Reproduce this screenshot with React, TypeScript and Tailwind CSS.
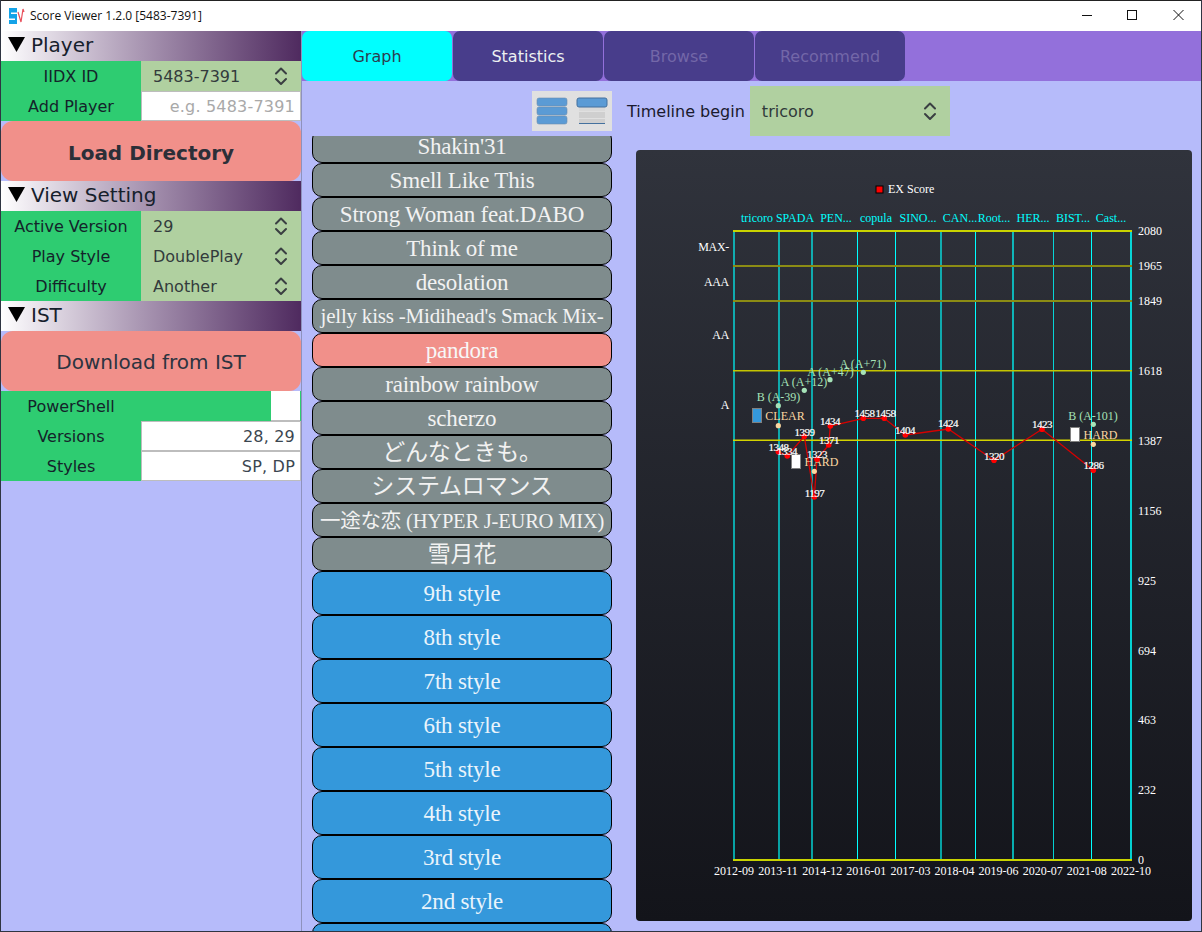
import React from "react";

const Chevrons = () => (
  <svg width="14" height="20" viewBox="0 0 14 20" className="shrink-0" fill="none" stroke="#3a3f42" strokeWidth="2" strokeLinecap="round" strokeLinejoin="round">
    <path d="M2 7.500 7 2.500l5 5" />
    <path d="M2 13 7 18l5-5" />
  </svg>
);

const Header = ({ title }: { title: string }) => (
  <div className="h-[30px] flex items-center pl-[7px] gap-[6px] bg-gradient-to-r from-white to-[#4f2a5f] text-[20px] text-[#16202c]">
    <svg width="17" height="15" viewBox="0 0 17 15" className="shrink-0 mb-[3px]"><polygon points="0,0 17,0 8.500,15" fill="#000" /></svg>
    <span className="pb-[2px]">{title}</span>
  </div>
);

const Label = ({ text }: { text: string }) => (
  <div className="w-[140px] h-full pt-[2px] bg-[#2ecc71] flex items-center justify-center text-[#14232a]">{text}</div>
);

const SelectRow = ({ label, value }: { label: string; value: string }) => (
  <div className="flex h-[30px]">
    <Label text={label} />
    <div className="flex-1 bg-[#b0d0a0] flex items-center justify-between pl-[12px] pr-[13px] text-[#333b3c]">
      <span className="pt-[2px]">{value}</span>
      <Chevrons />
    </div>
  </div>
);

const InputRow = ({ label, value, muted = false }: { label: string; value: string; muted?: boolean }) => (
  <div className="flex h-[30px]">
    <Label text={label} />
    <div className={`flex-1 pt-[2px] bg-white border border-[#bdbdbd] flex items-center justify-end pr-[5px] tracking-[0.2px] ${muted ? "text-[#a9a9a9]" : "text-[#3b4650]"}`}>{value}</div>
  </div>
);

const Sidebar = () => (
  <div className="w-[300px] shrink-0 flex flex-col">
    <Header title="Player" />
    <SelectRow label="IIDX ID" value="5483-7391" />
    <InputRow label="Add Player" value="e.g. 5483-7391" muted />
    <div className="h-[60px] pt-[3px] bg-[#f1908a] rounded-[12px] flex items-center justify-center text-[20px] font-bold text-[#2c2f38]">Load Directory</div>
    <Header title="View Setting" />
    <SelectRow label="Active Version" value="29" />
    <SelectRow label="Play Style" value="DoublePlay" />
    <SelectRow label="Difficulty" value="Another" />
    <Header title="IST" />
    <div className="h-[60px] pt-[2px] bg-[#f1908a] rounded-[12px] flex items-center justify-center text-[20px] text-[#2c3440]">Download from IST</div>
    <div className="flex h-[30px] bg-[#2ecc71]">
      <Label text="PowerShell" />
      <div className="flex-1" />
      <div className="w-[29px] bg-white border-b border-[#bdbdbd] mr-px" />
    </div>
    <InputRow label="Versions" value="28, 29" />
    <InputRow label="Styles" value="SP, DP" />
  </div>
);

const Tab = ({ text, kind }: { text: string; kind: "active" | "normal" | "disabled" }) => (
  <div
    className={`w-[150px] h-[50px] pt-[2px] mr-px rounded-[7px] flex items-center justify-center ${
      kind === "active" ? "bg-[#00ffff] text-[#2c3e50]" : kind === "normal" ? "bg-[#483d8b] text-[#ecf0f1]" : "bg-[#483d8b] text-[#7367a8]"
    }`}
  >
    {text}
  </div>
);

const ViewToggle = () => (
  <svg width="80" height="40" viewBox="0 0 80 40" className="shrink-0">
    <rect width="80" height="40" fill="#e0e0e0" />
    <rect x="5" y="7" width="30" height="8" rx="2" fill="#5b9bd5" stroke="#6d8fae" strokeWidth="0.6" />
    <rect x="5" y="16" width="30" height="8" rx="2" fill="#5b9bd5" stroke="#6d8fae" strokeWidth="0.6" />
    <rect x="5" y="25" width="30" height="8" rx="2" fill="#5b9bd5" stroke="#6d8fae" strokeWidth="0.6" />
    <rect x="47" y="15" width="26" height="5" fill="#d9d9d9" />
    <rect x="47" y="21" width="26" height="6" fill="#cfcfcf" />
    <rect x="47" y="28" width="26" height="4" fill="#cfcfcf" />
    <rect x="47" y="32" width="26" height="1" fill="#44719e" />
    <rect x="45" y="7" width="30" height="9" rx="2" fill="#5b9bd5" stroke="#44719e" strokeWidth="1" />
  </svg>
);

const serif = "font-['Liberation_Serif','Noto_Sans_CJK_JP',serif]";

type Item = { t: string; c: string; s?: string };
const rows: Item[] = [
  { t: "Shakin'31", c: "gray" },
  { t: "Smell Like This", c: "gray" },
  { t: "Strong Woman feat.DABO", c: "gray" },
  { t: "Think of me", c: "gray" },
  { t: "desolation", c: "gray" },
  { t: "jelly kiss -Midihead's Smack Mix-", c: "gray", s: "text-[21px]" },
  { t: "pandora", c: "red" },
  { t: "rainbow rainbow", c: "gray" },
  { t: "scherzo", c: "gray" },
  { t: "どんなときも。", c: "gray" },
  { t: "システムロマンス", c: "gray" },
  { t: "一途な恋 (HYPER J-EURO MIX)", c: "gray", s: "text-[20.5px]" },
  { t: "雪月花", c: "gray" },
  { t: "9th style", c: "blue" },
  { t: "8th style", c: "blue" },
  { t: "7th style", c: "blue" },
  { t: "6th style", c: "blue" },
  { t: "5th style", c: "blue" },
  { t: "4th style", c: "blue" },
  { t: "3rd style", c: "blue" },
  { t: "2nd style", c: "blue" },
  { t: "1st style", c: "blue" },
];

const SongList = () => (
  <div className="w-[300px] ml-[10px] shrink-0 overflow-hidden h-[795px]">
    <div className={`-mt-[7px] flex flex-col tracking-[-0.2px] ${serif}`}>
      {rows.map((r) => (
        <div
          key={r.t}
          className={`shrink-0 pt-[2px] border border-black rounded-[10px] flex items-center justify-center whitespace-nowrap ${r.s ?? "text-[23px]"} ${
            r.c === "gray"
              ? "h-[34px] bg-[#7f8c8d] text-[#f2f2f2]"
              : r.c === "red"
              ? "h-[34px] bg-[#f1908a] text-[#f7f7f7]"
              : "h-[44px] bg-[#3498db] text-[#eaf4fb]"
          }`}
        >
          {r.t}
        </div>
      ))}
    </div>
  </div>
);

const O = { x: 636, y: 150 };
const X = (x: number) => x - O.x;
const Y = (y: number) => y - O.y;

const vLines: [number, number, number][] = [
  [734, 2, 0.6], [779, 2, 0.6], [812, 2, 0.6], [857.5, 1, 1], [895.5, 1, 1], [941, 2, 0.6],
  [975.5, 1, 1], [1013, 2, 0.65], [1053.5, 1, 0.8], [1091.5, 1, 1], [1131, 2, 0.8],
];
const hLines: [number, number, string][] = [
  [231, 2, "#c9d300"], [266, 2, "#8c8c14"], [301, 2, "#8c8c14"], [370.7, 1.5, "#c4c400"], [440.3, 1.5, "#d4d400"], [860, 2, "#c9d300"],
];
const vers: [string, number][] = [
  ["tricoro", 757], ["SPADA", 795], ["PEN...", 836], ["copula", 876], ["SINO...", 918], ["CAN...", 960], ["Root...", 994], ["HER...", 1033], ["BIST...", 1073], ["Cast...", 1111],
];
const yAxis: [string, number][] = [
  ["2080", 231], ["1965", 266], ["1849", 301], ["1618", 371], ["1387", 441], ["1156", 511], ["925", 581], ["694", 651], ["463", 720], ["232", 790], ["0", 860],
];
const grades: [string, number][] = [["MAX-", 247], ["AAA", 282], ["AA", 335], ["A", 405]];
const dates = ["2012-09", "2013-11", "2014-12", "2016-01", "2017-03", "2018-04", "2019-06", "2020-07", "2021-08", "2022-10"];
const pts: [string, number, number, number, number][] = [
  ["1348", 778.3, 451.7, 778.5, 447],
  ["1334", 787.3, 456, 787, 451],
  ["1399", 804.3, 436.3, 804.5, 431.5],
  ["1197", 814.3, 497, 814.5, 492.5],
  ["1323", 817, 459.3, 817, 454],
  ["1371", 828.7, 445, 829, 439.5],
  ["1434", 830.3, 426, 830, 420.5],
  ["1458", 863.3, 418.3, 864.5, 413],
  ["1458", 884.3, 418.3, 885.5, 413],
  ["1404", 905.3, 435, 905, 429.5],
  ["1424", 948.3, 429, 948, 423],
  ["1320", 994, 460.3, 994, 455.5],
  ["1423", 1042, 429.3, 1042, 424],
  ["1286", 1093.3, 470.3, 1093.5, 465],
];
const greens: [string, number, number, number, number][] = [
  ["B (A-39)", 778.3, 405.7, 778.5, 397],
  ["A (A+12)", 804.3, 390.3, 804, 382],
  ["A (A+47)", 830, 379.7, 830.5, 371.5],
  ["A (A+71)", 863.3, 372.3, 863, 364],
  ["B (A-101)", 1093.3, 424.3, 1093, 416],
];
const oranges: [string, number, number, number, number][] = [
  ["CLEAR", 778.3, 425.7, 785, 416],
  ["HARD", 814.3, 471.3, 821.5, 462],
  ["HARD", 1093.3, 444.3, 1100.5, 435],
];
const bars: [number, number, string][] = [
  [752, 408, "#3498db"],
  [791, 454, "#ffffff"],
  [1070, 427, "#ffffff"],
];

const Chart = () => (
  <div className="w-[556px] h-[771px] rounded-[4px] bg-gradient-to-b from-[#30333c] to-[#13141a]">
    <svg width="556" height="771" viewBox="0 0 556 771" className={`${serif} text-[12px]`}>
      <rect x={X(876)} y={Y(186)} width="7" height="7" fill="#ff0000" stroke="#000" />
      <text x={X(888)} y={Y(193)} fill="#fff">EX Score</text>
      {vers.map(([t, x]) => (
        <text key={t} x={X(x)} y={Y(222)} fill="#00ffff" textAnchor="middle">{t}</text>
      ))}
      {vLines.map(([x, w, o]) => (
        <line key={x} x1={X(x)} x2={X(x)} y1={Y(231)} y2={Y(860)} stroke="#00ffff" strokeWidth={w} opacity={o} />
      ))}
      {hLines.map(([y, w, c]) => (
        <line key={y} x1={X(733)} x2={X(1132)} y1={Y(y)} y2={Y(y)} stroke={c} strokeWidth={w} />
      ))}
      {yAxis.map(([t, y]) => (
        <text key={t} x={X(1138)} y={Y(y + 4)} fill="#fff">{t}</text>
      ))}
      {grades.map(([t, y]) => (
        <text key={t} x={X(729)} y={Y(y + 4)} fill="#fff" textAnchor="end" letterSpacing="-0.3">{t}</text>
      ))}
      {dates.map((t, i) => (
        <text key={t} x={X(734 + i * 44.1)} y={Y(875)} fill="#fff" textAnchor="middle">{t}</text>
      ))}
      <polyline points={pts.map((p) => `${X(p[1])},${Y(p[2])}`).join(" ")} fill="none" stroke="#d50000" strokeWidth="1.3" />
      {greens.map(([t, x, y, tx, ty]) => (
        <g key={t}>
          <circle cx={X(x)} cy={Y(y)} r="2.6" fill="#a6e3b8" />
          <text x={X(tx)} y={Y(ty + 4)} fill="#a6e3b8" textAnchor="middle">{t}</text>
        </g>
      ))}
      {oranges.map(([t, x, y, tx, ty]) => (
        <circle key={x} cx={X(x)} cy={Y(y)} r="2.6" fill="#fad7a0" />
      ))}
      {bars.map(([x, y, c]) => (
        <rect key={x} x={X(x) + 0.5} y={Y(y) + 0.5} width="9" height="14" fill={c} stroke="#808080" />
      ))}
      {oranges.map(([t, x, , tx, ty]) => (
        <text key={x} x={X(tx)} y={Y(ty + 4)} fill="#fad7a0" textAnchor="middle">{t}</text>
      ))}
      {pts.map(([t, x, y]) => (
        <circle key={x} cx={X(x)} cy={Y(y)} r="2.8" fill="#ff0000" />
      ))}
      {pts.map(([t, x, , tx, ty]) => (
        <text key={x} x={X(tx)} y={Y(ty + 4)} fill="#fff" stroke="#fff" strokeWidth="0.2" textAnchor="middle" fontSize="11" letterSpacing="-0.5">{t}</text>
      ))}
    </svg>
  </div>
);

const Logo = () => (
  <svg width="17" height="17" viewBox="0 0 17 17" className="shrink-0">
    <rect x="0" y="0" width="8" height="16" fill="#14a3e8" />
    <rect x="2" y="4.500" width="6" height="1.500" fill="#fff" />
    <rect x="0" y="10.500" width="6" height="1.500" fill="#fff" />
    <path d="M9 4l3 10 2-13 1 3" fill="none" stroke="#e8505b" strokeWidth="1.2" />
  </svg>
);

export default function App() {
  return (
    <div className="w-[1202px] h-[932px] overflow-hidden flex flex-col bg-[#b6bbfa] border-x border-b border-[#2f3542] border-t-0 font-['DejaVu_Sans',sans-serif] text-[16px]">
      <div className="h-[31px] shrink-0 bg-white border-t border-[#222] flex items-center pl-[8px] gap-[4px]">
        <Logo />
        <span className="text-[12px] text-[#111] font-['Open_Sans',sans-serif] flex-1">Score Viewer 1.2.0 [5483-7391]</span>
        <svg width="135" height="30" viewBox="0 0 135 30" fill="none" stroke="#111" strokeWidth="1" className="shrink-0">
          <path d="M16 14.500h10" />
          <rect x="61.500" y="9.500" width="9" height="9" />
          <path d="M107.500 9l10 10M117.500 9l-10 10" />
        </svg>
      </div>
      <div className="flex-1 flex min-h-0">
        <Sidebar />
        <div className="flex-1 flex flex-col border-l border-[#8e92bd] min-w-0">
          <div className="h-[50px] shrink-0 bg-[#9370db] flex">
            <Tab text="Graph" kind="active" />
            <Tab text="Statistics" kind="normal" />
            <Tab text="Browse" kind="disabled" />
            <Tab text="Recommend" kind="disabled" />
          </div>
          <div className="h-[55px] shrink-0 flex items-start pl-[230px] pt-[5px]">
            <div className="mt-[5px]"><ViewToggle /></div>
            <div className="flex items-center ml-[15px]">
              <span className="text-[#1a1a2e] mr-[5px] pt-[2px]">Timeline begin</span>
              <div className="w-[200px] h-[50px] bg-[#b0d0a0] flex items-center justify-between pl-[12px] pr-[13px] text-[#2f3a3a]">
                <span className="pt-[2px]">tricoro</span>
                <Chevrons />
              </div>
            </div>
          </div>
          <div className="flex flex-1 min-h-0">
            <SongList />
            <div className="ml-[24px] mt-[14px]"><Chart /></div>
          </div>
        </div>
      </div>
    </div>
  );
}
